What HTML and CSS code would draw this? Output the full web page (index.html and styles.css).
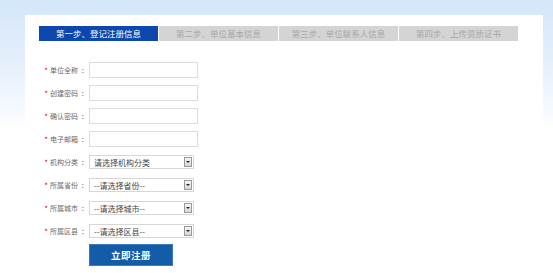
FILE: index.html
```html
<!DOCTYPE html>
<html lang="zh-CN">
<head>
    <meta charset="UTF-8">
    <title>注册</title>
    <link rel="stylesheet" href="styles.css">
</head>
<body>
    <div class="panel">
        <div class="steps">
            <div class="step active">第一步、登记注册信息</div>
            <div class="step">第二步、单位基本信息</div>
            <div class="step">第三步、单位联系人信息</div>
            <div class="step">第四步、上传资质证书</div>
        </div>

        <div class="form">
            <div class="row">
                <label><i>*</i>单位全称<em>：</em></label>
                <div class="field"></div>
            </div>
            <div class="row">
                <label><i>*</i>创建密码<em>：</em></label>
                <div class="field"></div>
            </div>
            <div class="row">
                <label><i>*</i>确认密码<em>：</em></label>
                <div class="field"></div>
            </div>
            <div class="row">
                <label><i>*</i>电子邮箱<em>：</em></label>
                <div class="field"></div>
            </div>
            <div class="row">
                <label><i>*</i>机构分类<em>：</em></label>
                <div class="select"><span>请选择机构分类</span><b class="arrow"></b></div>
            </div>
            <div class="row">
                <label><i>*</i>所属省份<em>：</em></label>
                <div class="select"><span>--请选择省份--</span><b class="arrow"></b></div>
            </div>
            <div class="row">
                <label><i>*</i>所属城市<em>：</em></label>
                <div class="select"><span>--请选择城市--</span><b class="arrow"></b></div>
            </div>
            <div class="row">
                <label><i>*</i>所属区县<em>：</em></label>
                <div class="select"><span>--请选择区县--</span><b class="arrow"></b></div>
            </div>
            <div class="row submit">
                <button class="btn">立即注册</button>
            </div>
        </div>
    </div>
</body>
</html>
```

FILE: styles.css
```css
body, html {
    margin: 0;
    height: 100%;
    font-family: "Noto Sans CJK SC", "Liberation Sans", sans-serif;
    background: linear-gradient(to bottom, #d4e6fa 0, #e4effc 60px, #f6f9fe 110px, #fff 130px);
    overflow: hidden;
}
.panel {
    box-sizing: border-box;
    background-color: #fff;
    margin: 15px 10px 0 25px;
    padding: 11px 0 0 14px;
    height: calc(100% - 15px);
}
.steps {
    display: flex;
    gap: 1px;
}
.step {
    width: 119px;
    height: 15px;
    line-height: 15px;
    font-size: 8.5px;
    text-align: center;
    background-color: #d4d4d4;
    color: #a8a8a8;
}
.step.active {
    background-color: #0b47ad;
    color: #fff;
}
.form {
    padding-top: 21px;
}
.row {
    display: flex;
    align-items: center;
    height: 16px;
    margin-bottom: 7px;
}
.row label {
    width: 50px;
    font-size: 7px;
    color: #6a6a6a;
    white-space: nowrap;
    display: flex;
    justify-content: flex-end;
    align-items: center;
}
.row label i {
    font-style: normal;
    font-size: 8px;
    color: #e60000;
    margin-right: 2px;
}
.row label em {
    font-style: normal;
    padding: 0 1px 0 3px;
}
.field {
    box-sizing: border-box;
    width: 109px;
    height: 16px;
    border: 1px solid #dcdcdc;
    background: #fff;
}
.select {
    box-sizing: border-box;
    width: 105px;
    height: 14px;
    border: 1px solid #d6d6d6;
    display: flex;
    align-items: center;
    justify-content: space-between;
    font-size: 8px;
    color: #444;
    padding: 0 1px 0 4px;
}
.select span {
    white-space: nowrap;
}
.arrow {
    box-sizing: border-box;
    width: 8px;
    height: 10px;
    border: 1px solid #999;
    background: linear-gradient(to bottom, #f6f6f6, #d6d6d6);
    position: relative;
}
.arrow::after {
    content: "";
    position: absolute;
    left: 1px;
    top: 3px;
    border-left: 2px solid transparent;
    border-right: 2px solid transparent;
    border-top: 2px solid #222;
}
.submit {
    height: 22px;
    padding-left: 50px;
    margin-top: -2px;
}
.btn {
    width: 84px;
    height: 22px;
    border: 1px solid #3a7cc0;
    background-color: #155ca8;
    color: #fff;
    font-family: "Noto Sans CJK SC", sans-serif;
    font-weight: bold;
    font-size: 9.5px;
    letter-spacing: 0.5px;
    padding: 0;
}
```
